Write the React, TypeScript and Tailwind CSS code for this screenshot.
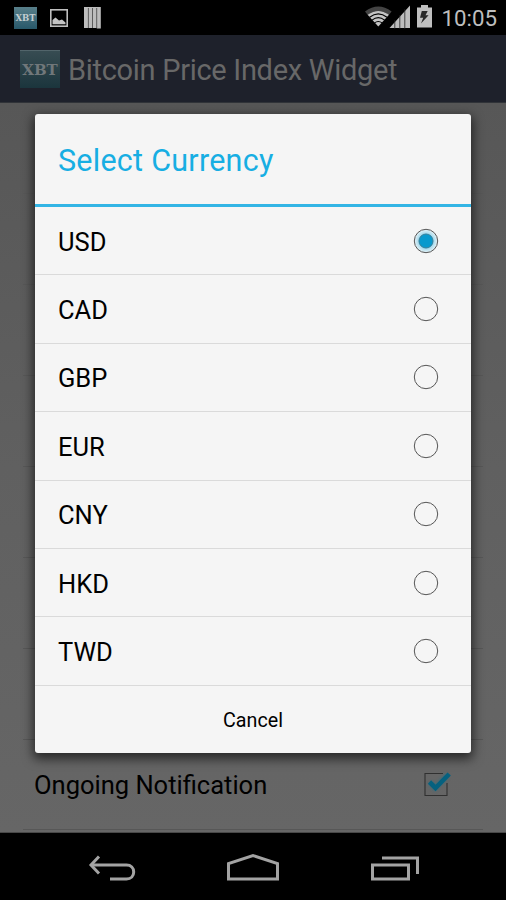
import { useState } from 'react';

const currencies = ['USD', 'CAD', 'GBP', 'EUR', 'CNY', 'HKD', 'TWD'];

const hiddenPreferences = [1, 2, 3, 4, 5, 6, 7];

function StatusBar() {
  return (
    <div className="flex h-[35px] shrink-0 items-center bg-black pr-[9px] pl-[14px]">
      <div className="flex h-[22px] w-[23px] items-center justify-center bg-linear-to-b from-[#587f8a] to-[#28586a]">
        <span className="pt-[1px] font-['DejaVu_Serif',serif] text-[8.5px] leading-none font-bold text-[#c3cdd0]">XBT</span>
      </div>
      <svg className="ml-[13px]" width="18" height="18" viewBox="0 0 18 18">
        <rect x="0.8" y="0.8" width="16.4" height="16.4" fill="none" stroke="#bfbfbf" strokeWidth="1.6" />
        <path d="M2.5 15.3V11L5.5 8.6L9 11.5L12 10.5L15.5 13.5V15.3Z" fill="#c4c4c4" />
      </svg>
      <svg className="ml-4" width="17" height="22" viewBox="0 0 17 22">
        <path d="M0 0H16.8V21.5H13.1L12.4 21H0Z" fill="#bdbdbd" />
        <path d="M4.4 1V21M8.5 1V21M12.7 1V21" stroke="#444" strokeWidth="0.8" />
      </svg>
      <div className="ml-auto flex items-center">
        <svg width="68" height="24" viewBox="0 0 68 24">
          {/* Wifi */}
          <path d="M0 6.5Q13.3 -3.5 26.6 6.5L24 9.8Q13.3 2 2.6 9.8Z" fill="#444" />
          <path d="M2.6 9.8Q13.3 2 24 9.8L13.3 21.5Z" fill="#c4c4c4" />
          <path d="M4.6 12.3Q13.3 5.5 22 12.3M7 15.1Q13.3 10.2 19.6 15.1M9.5 17.9Q13.3 15 17.1 17.9" fill="none" stroke="#000" strokeWidth="1.1" />
          {/* Signal */}
          <path d="M24.5 23L45 0.5V23Z" fill="#bdbdbd" />
          <path d="M29.8 15V24M34.8 10V24M39.8 4V24" stroke="#222" strokeWidth="0.8" />
          {/* Battery */}
          <path d="M52 2.5H56V0H63V2.5H67V22.5H52Z" fill="#bfbfbf" />
          <path d="M56.8 6H62.7L60.5 10.3H63.6L56 18.5L58.2 12.8H55Z" fill="#292929" />
        </svg>
        <span className="ml-2 pt-[2px] text-[22.3px] leading-none text-[#bebebe]">10:05</span>
      </div>
    </div>
  );
}

function ActionBar() {
  return (
    <header className="flex h-[68px] shrink-0 items-center border-b border-[#303338] bg-[#1e212b] pl-5">
      <div className="flex h-[38px] w-10 items-center justify-center border-t border-[#52656b] bg-linear-to-b from-[#374c52] to-[#1b353d]">
        <span className="pt-[3px] font-['DejaVu_Serif',serif] text-[15px] leading-none font-bold text-[#70777a]">XBT</span>
      </div>
      <h1 className="ml-2 pt-[3px] text-[29px] leading-none tracking-[-0.3px] whitespace-nowrap text-[#686868]">
        Bitcoin Price Index Widget
      </h1>
    </header>
  );
}

function CheckboxMark() {
  return (
    <svg className="mb-[2px]" width="28" height="26" viewBox="0 0 28 26">
      <defs>
        <filter id="glow" x="-40%" y="-40%" width="180%" height="180%">
          <feGaussianBlur stdDeviation="1.8" />
        </filter>
      </defs>
      <path d="M20 2.5H2V24.5H24V12" fill="none" stroke="#303030" strokeWidth="1.1" />
      <path d="M7 11.5L12 17L24.5 4" fill="none" stroke="#287085" strokeWidth="5" opacity="0.6" filter="url(#glow)" />
      <path d="M6.5 11L12.5 17L26.2 3" fill="none" stroke="#06617f" strokeWidth="4.6" />
    </svg>
  );
}

function Preferences() {
  return (
    <main className="flex h-[730px] flex-1 flex-col border-b border-[#484848] bg-linear-to-b from-[#575757] via-[#606060] to-[#666] px-[23px]">
      {hiddenPreferences.map((row) => (
        <div key={row} className="h-[91px] shrink-0 border-b border-[#575757]" />
      ))}
      <div className="flex h-[90px] shrink-0 items-center justify-between border-b border-[#575757] pr-[32px] pl-[11px]">
        <span className="pt-[3px] text-[25.5px] leading-none text-black">Ongoing Notification</span>
        <CheckboxMark />
      </div>
    </main>
  );
}

function Radio({ checked }: { checked: boolean }) {
  return (
    <svg width="26" height="26" viewBox="0 0 26 26">
      <defs>
        <radialGradient id="halo">
          <stop offset="0.6" stopColor="#9ed7ec" />
          <stop offset="1" stopColor="#e9f3f6" />
        </radialGradient>
      </defs>
      <circle cx="13" cy="13" r="11.7" fill={checked ? 'url(#halo)' : 'none'} stroke="#555" strokeWidth="1" />
      {checked && <circle cx="13" cy="13" r="7" fill="#0799cd" stroke="#397f98" strokeWidth="1" />}
    </svg>
  );
}

function CurrencyDialog() {
  const [selected, setSelected] = useState('USD');

  return (
    <div
      role="dialog"
      className="absolute top-[114px] left-[35px] flex h-[639px] w-[436px] flex-col overflow-hidden rounded-[3px] bg-[#f5f5f5] shadow-[0_4px_11px_2px_rgba(0,0,0,0.6)]"
    >
      <div className="flex h-[93px] shrink-0 items-center border-b-[3px] border-[#33b5e5] pl-[23px]">
        <h2 className="pt-[5px] text-[30.5px] leading-none tracking-[0.25px] text-[#17aee3]">Select Currency</h2>
      </div>
      {currencies.map((currency) => (
        <button
          key={currency}
          onClick={() => setSelected(currency)}
          className="flex h-[68.4px] shrink-0 items-center justify-between border-b border-[#dadada] pr-8 pl-[23px]"
        >
          <span className="pt-[3.5px] text-[25.5px] leading-none text-black">{currency}</span>
          <Radio checked={selected === currency} />
        </button>
      ))}
      <button className="flex-1 pt-[2px] text-[19.7px] leading-none text-black">Cancel</button>
    </div>
  );
}

function NavigationBar() {
  return (
    <nav className="flex h-[67px] shrink-0 items-center justify-between bg-black pt-[3px] pr-[86px] pl-[88px]">
      <svg width="49" height="30" viewBox="0 0 49 30" fill="none" stroke="#a3a3a3" strokeWidth="3">
        <path d="M4 12H38.5C43 12 45.7 15 45.7 19C45.7 23 43 26 38.5 26H22" />
        <path d="M11 3.5L3 12L11 20.5" />
      </svg>
      <svg width="54" height="30" viewBox="0 0 54 30" fill="none" stroke="#a3a3a3" strokeWidth="3">
        <path d="M1.5 26V10.5L26 2.5L50.5 10.5V26Z" />
      </svg>
      <svg width="50" height="30" viewBox="0 0 50 30" fill="none" stroke="#a3a3a3" strokeWidth="3">
        <path d="M2.5 12H38.5V26H2.5Z" />
        <path d="M12 5H47.5V21" />
      </svg>
    </nav>
  );
}

export default function App() {
  return (
    <div className="relative flex h-[900px] w-[506px] flex-col overflow-hidden bg-black font-['Roboto',sans-serif]">
      <StatusBar />
      <ActionBar />
      <Preferences />
      <NavigationBar />
      <CurrencyDialog />
    </div>
  );
}
